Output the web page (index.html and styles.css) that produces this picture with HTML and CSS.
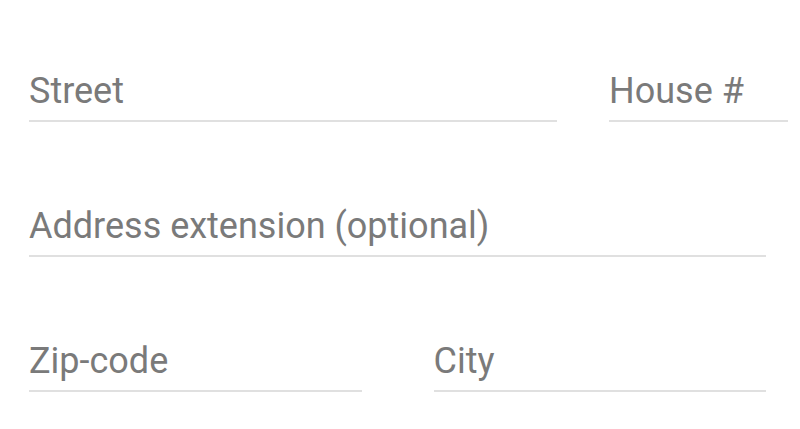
FILE: index.html
```html
<!DOCTYPE html>
<html lang="en">
<head>
  <meta charset="UTF-8">
  <meta name="viewport" content="width=device-width, initial-scale=1.0">
  <title>Address</title>
  <link rel="stylesheet" href="styles.css">
</head>
<body>
  <form class="address-form">
    <div class="row row-street">
      <input class="field" type="text" placeholder="Street">
      <input class="field" type="text" placeholder="House #">
    </div>
    <div class="row row-extension">
      <input class="field" type="text" placeholder="Address extension (optional)">
    </div>
    <div class="row row-city">
      <input class="field" type="text" placeholder="Zip-code">
      <input class="field" type="text" placeholder="City">
    </div>
  </form>
</body>
</html>
```

FILE: styles.css
```css
html, body {
  margin: 0;
  background-color: #fff;
}
body {
  font-family: Roboto, "Liberation Sans", sans-serif;
}
.address-form {
  display: flex;
  flex-direction: column;
  gap: 84px;
  padding: 71px 0 0 29px;
}
.row {
  display: flex;
}
.row-street {
  width: 759px;
  gap: 52px;
}
.row-street .field:first-child {
  width: 528px;
}
.row-street .field:last-child {
  width: 179px;
}
.row-extension,
.row-city {
  width: 737px;
}
.row-city {
  gap: 72px;
}
.row-extension .field,
.row-city .field {
  flex: 1;
  min-width: 0;
}
.field {
  box-sizing: border-box;
  height: 51px;
  margin: 0;
  padding: 0 0 10px 0;
  border: none;
  border-bottom: 2px solid #e0e0e0;
  outline: none;
  background: transparent;
  font-family: inherit;
  font-size: 36px;
  line-height: 39px;
  color: #333;
}
.field::placeholder {
  color: #7a7a7a;
  opacity: 1;
}
```
